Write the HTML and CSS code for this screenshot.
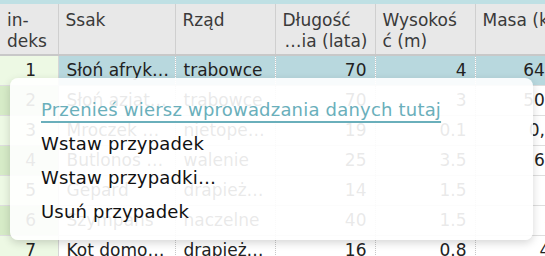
FILE: index.html
```html
<!DOCTYPE HTML>
<html>
	<head>
		<meta charset="utf-8"/>
		<link rel="stylesheet" href="styles.css">
	</head>
	<body>
		<div class="strip"></div>
		<table class="grid">
			<colgroup>
				<col class="c-idx"><col class="c-name"><col class="c-mid"><col class="c-mid"><col class="c-mid"><col class="c-mid">
			</colgroup>
			<thead>
				<tr>
					<th>in-<br>deks</th>
					<th>Ssak</th>
					<th>Rząd</th>
					<th>Długość<br><span class="tail">…ia (lata)</span></th>
					<th>Wysokoś<br>ć (m)</th>
					<th>Masa (kg)</th>
				</tr>
			</thead>
			<tbody>
				<tr class="sel odd">
					<td class="idx">1</td><td>Słoń afryk…</td><td>trabowce</td><td class="num">70</td><td class="num">4</td><td class="num">6400</td>
				</tr>
				<tr class="even">
					<td class="idx">2</td><td>Słoń aziat…</td><td>trabowce</td><td class="num">70</td><td class="num">3</td><td class="num">5000</td>
				</tr>
				<tr class="odd">
					<td class="idx">3</td><td>Mroczek …</td><td>nietope…</td><td class="num">19</td><td class="num">0.1</td><td class="num">0,03</td>
				</tr>
				<tr class="even">
					<td class="idx">4</td><td>Butlonos …</td><td>walenie</td><td class="num">25</td><td class="num">3.5</td><td class="num">650</td>
				</tr>
				<tr class="odd">
					<td class="idx">5</td><td>Gepard</td><td>drapież…</td><td class="num">14</td><td class="num">1.5</td><td class="num">50</td>
				</tr>
				<tr class="even">
					<td class="idx">6</td><td>Szympans</td><td>naczelne</td><td class="num">40</td><td class="num">1.5</td><td class="num">45</td>
				</tr>
				<tr class="odd">
					<td class="idx">7</td><td>Kot domo…</td><td>drapież…</td><td class="num">16</td><td class="num">0.8</td><td class="num">4.5</td>
				</tr>
			</tbody>
		</table>

		<div class="menu">
			<div class="menu-list">
				<a class="menu-link" href="#">Przenieś wiersz wprowadzania danych tutaj</a>
				<div class="menu-item">Wstaw przypadek</div>
				<div class="menu-item">Wstaw przypadki…</div>
				<div class="menu-item">Usuń przypadek</div>
			</div>
		</div>
	</body>
</html>
```

FILE: styles.css
```css
body{margin:0;overflow:hidden;font-family:"DejaVu Sans",sans-serif;color:#222;background:#fff;}

.strip{height:4px;background:#bfe0e4;}

.grid{border-collapse:collapse;table-layout:fixed;width:574px;font-size:17px;}
.c-idx{width:58px;}
.c-name{width:117px;}
.c-mid{width:100px;}

.grid th{background:#e8e8e8;font-weight:normal;text-align:left;vertical-align:top;color:#3a3a3a;
	height:51px;box-sizing:border-box;padding:6px 7px 0;line-height:21px;
	border-right:1px solid #cfcfcf;border-bottom:2px solid #c8c8c8;white-space:nowrap;overflow:hidden;}
.grid th .tail{display:block;text-align:right;}

.grid td{height:30px;box-sizing:border-box;padding:0 8px;white-space:nowrap;overflow:hidden;
	border-right:1px dotted #c8c8c8;border-bottom:1px solid #dedede;line-height:29px;}
.grid td.num{text-align:right;}
.grid td.idx{text-align:center;padding:0 0 0 4px;border-right:1px solid #d6d6d6;}

.odd td.idx{background:#edf9e4;}
.even td.idx{background:#d6ebc7;}
.sel td{background:#b8d8de;}
.sel td.idx{background:#edf9e4;}

.menu{position:absolute;left:10px;top:78px;width:523px;height:162px;box-sizing:border-box;
	background:rgba(255,255,255,.9);border-radius:8px;box-shadow:0 3px 8px rgba(0,0,0,.16);
	padding:15px 15px 0 31px;font-size:18px;letter-spacing:.2px;}
.menu-list{line-height:34px;color:#111;}
.menu-link{display:inline-block;color:#6aafbb;text-decoration:underline;text-decoration-thickness:1.5px;text-underline-offset:5px;}
.menu-item{white-space:nowrap;}
```
